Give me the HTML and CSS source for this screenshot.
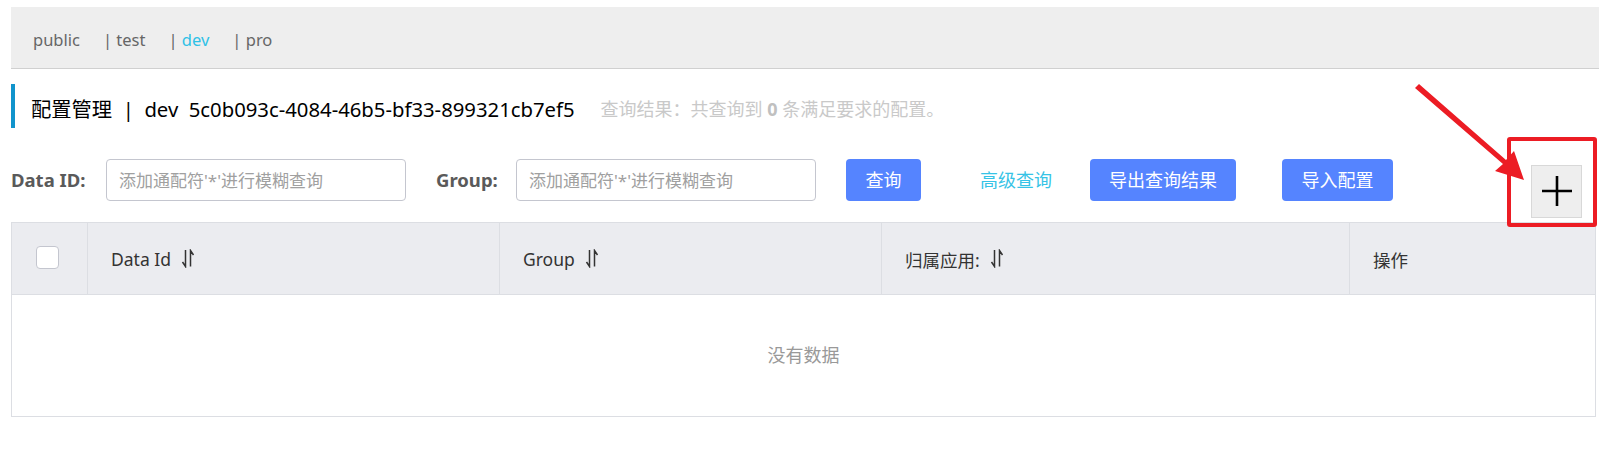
FILE: index.html
```html
<!DOCTYPE html>
<html lang="zh-CN">
<head>
<meta charset="utf-8">
<title>配置管理</title>
<link rel="stylesheet" href="styles.css">
</head>
<body>
<div class="page">
  <div class="ns-bar">
    <span class="ns">public</span>
    <span class="ns">| test</span>
    <span class="ns"><span class="sep">| </span><span class="ns-active">dev</span></span>
    <span class="ns">| pro</span>
  </div>

  <div class="title">
    <span class="title-main">配置管理&nbsp;&nbsp;|&nbsp;&nbsp;dev&nbsp;&nbsp;5c0b093c-4084-46b5-bf33-899321cb7ef5</span>
    <span class="title-result">查询结果：共查询到 <b>0</b> 条满足要求的配置。</span>
  </div>

  <div class="search">
    <label class="lbl lbl-id">Data ID:</label>
    <input class="inp" type="text" placeholder="添加通配符'*'进行模糊查询">
    <label class="lbl lbl-group">Group:</label>
    <input class="inp" type="text" placeholder="添加通配符'*'进行模糊查询">
    <button class="btn btn-query">查询</button>
    <a class="adv">高级查询</a>
    <button class="btn btn-export">导出查询结果</button>
    <button class="btn btn-import">导入配置</button>
    <button class="add" aria-label="add">
      <svg width="32" height="32" viewBox="0 0 32 32"><path d="M1 16H31M16 1V31" stroke="#000" stroke-width="2.6" fill="none"/></svg>
    </button>
  </div>

  <div class="table">
    <div class="thead">
      <div class="th th-check"><span class="checkbox"></span></div>
      <div class="th">Data Id <svg class="sort" width="14" height="19" viewBox="0 0 14 19"><path d="M4.5 1V17.5L1.5 13M9.5 17.5V1.5L12.5 6" stroke="#333" stroke-width="1.5" fill="none"/></svg></div>
      <div class="th">Group <svg class="sort" width="14" height="19" viewBox="0 0 14 19"><path d="M4.5 1V17.5L1.5 13M9.5 17.5V1.5L12.5 6" stroke="#333" stroke-width="1.5" fill="none"/></svg></div>
      <div class="th">归属应用: <svg class="sort" width="14" height="19" viewBox="0 0 14 19"><path d="M4.5 1V17.5L1.5 13M9.5 17.5V1.5L12.5 6" stroke="#333" stroke-width="1.5" fill="none"/></svg></div>
      <div class="th th-last">操作</div>
    </div>
    <div class="tbody">没有数据</div>
  </div>
</div>

<div class="highlight"></div>
<svg class="arrow" width="1605" height="451" viewBox="0 0 1605 451">
  <polygon points="1415,88 1419,84 1506,160 1514,151 1524,180 1495,171 1503,164" fill="#ec1c24"/>
</svg>
</body>
</html>
```

FILE: styles.css
```css
html, body {
  margin: 0;
  padding: 0;
  background: #fff;
}
body {
  font-family: "Noto Sans", "Noto Sans CJK SC", sans-serif;
  color: #333;
}
.page {
  padding: 7px 9px 0 11px;
}
.ns-bar {
  height: 62px;
  background: #eeeeee;
  border-bottom: 1px solid #d0d0d0;
  display: flex;
  align-items: center;
  padding: 5px 0 0 22px;
  box-sizing: border-box;
  margin-right: -3px;
  font-size: 16.5px;
  color: #666;
}
.ns {
  margin-right: 23px;
  line-height: 20px;
}
.ns-active {
  color: #2fc1e6;
}
.title {
  margin-top: 15px;
  height: 44px;
  border-left: 4px solid #1194cc;
  padding-left: 16px;
  display: flex;
  align-items: center;
  padding-top: 5px;
  box-sizing: border-box;
}
.title-main {
  font-size: 20.3px;
  color: #000;
  line-height: 24px;
}
.title-result {
  margin-left: 26px;
  font-size: 18px;
  color: #c9c9c9;
  line-height: 24px;
}
.title-result b {
  color: #c0c0c0;
}
.search {
  margin-top: 31px;
  display: flex;
  align-items: flex-start;
  height: 59px;
}
.lbl {
  font-size: 18.5px;
  font-weight: bold;
  color: #5a5a5a;
  line-height: 42px;
  white-space: nowrap;
}
.lbl-id {
  width: 75px;
}
.lbl-group {
  margin-left: 30px;
  width: 60px;
}
.inp {
  margin-left: 20px;
  width: 300px;
  height: 42px;
  box-sizing: border-box;
  border: 1px solid #c4c6cf;
  border-radius: 4px;
  padding: 0 12px;
  font-family: "Noto Sans", "Noto Sans CJK SC", sans-serif;
  font-size: 17px;
  outline: none;
}
.inp::placeholder {
  color: #a0a0a0;
}
.btn {
  height: 42px;
  box-sizing: border-box;
  border: none;
  border-radius: 4px;
  background: #5584ff;
  color: #fff;
  font-family: "Noto Sans", "Noto Sans CJK SC", sans-serif;
  font-size: 18px;
  padding: 0;
  line-height: 42px;
}
.btn-query {
  margin-left: 30px;
  width: 75px;
}
.adv {
  margin-left: 59px;
  font-size: 18px;
  color: #36c3e6;
  line-height: 42px;
}
.btn-export {
  margin-left: 38px;
  width: 146px;
}
.btn-import {
  margin-left: 46px;
  width: 111px;
}
.add {
  margin-left: auto;
  margin-right: 14px;
  margin-top: 6px;
  width: 51px;
  height: 53px;
  box-sizing: border-box;
  background: #eeeeee;
  border: 1px solid #d8d8d8;
  padding: 0;
  display: flex;
  align-items: center;
  justify-content: center;
}
.add svg {
  display: block;
  margin-top: -2px;
}
.table {
  margin-top: 4px;
  border: 1px solid #dcdee3;
}
.thead {
  display: grid;
  grid-template-columns: 76px 412px 382px 468px 1fr;
  height: 71px;
  background: #ebecf0;
  border-bottom: 1px solid #dcdee3;
}
.th {
  display: flex;
  align-items: center;
  padding-left: 23px;
  font-size: 17.5px;
  color: #333;
  border-right: 1px solid #dcdee3;
  padding-top: 1px;
}
.th-last {
  border-right: none;
}
.th-check {
  padding-left: 24px;
}
.checkbox {
  width: 23px;
  height: 23px;
  box-sizing: border-box;
  background: #fff;
  border: 1px solid #c4c6cf;
  border-radius: 4px;
  margin-top: -4px;
}
.sort {
  margin-left: 10px;
  margin-top: -2px;
}
.tbody {
  height: 121px;
  display: flex;
  align-items: center;
  justify-content: center;
  font-size: 18px;
  color: #999;
  padding-bottom: 4px;
  box-sizing: border-box;
}
.highlight {
  position: absolute;
  left: 1507px;
  top: 137px;
  width: 90px;
  height: 90px;
  box-sizing: border-box;
  border: 4px solid #ec1c24;
  border-radius: 3px;
}
.arrow {
  position: absolute;
  left: 0;
  top: 0;
  pointer-events: none;
}
```
